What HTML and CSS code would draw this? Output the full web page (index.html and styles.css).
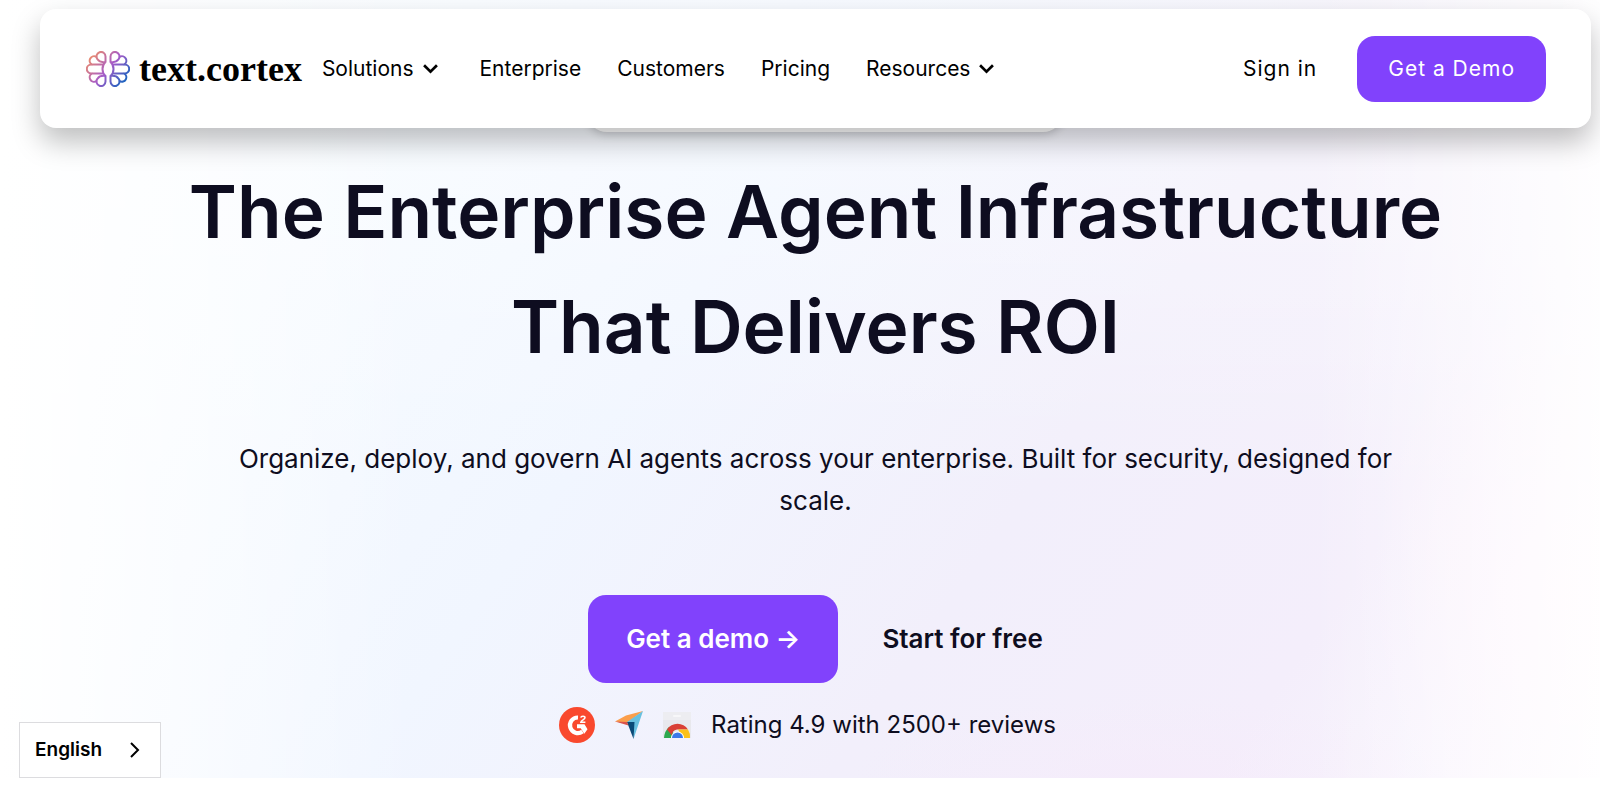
FILE: index.html
```html
<!DOCTYPE html>
<html lang="en">
<head>
<meta charset="utf-8">
<meta name="viewport" content="width=device-width, initial-scale=1">
<title>TextCortex</title>
<link rel="stylesheet" href="styles.css">
</head>
<body>
<div class="hero">
  <header class="navbar">
    <a class="brand" href="#">
      <svg class="brand-mark" viewBox="0 0 44 36" fill="none" stroke="url(#brandGradient)" stroke-width="2" stroke-linejoin="round" stroke-linecap="round" aria-hidden="true">
        <defs>
          <linearGradient id="brandGradient" x1="4" y1="3" x2="40" y2="33" gradientUnits="userSpaceOnUse">
            <stop offset="0" stop-color="#ef8f68"/>
            <stop offset="0.5" stop-color="#a65cc8"/>
            <stop offset="1" stop-color="#0c64be"/>
          </linearGradient>
        </defs>
        <path d="M19.500 11V5.500a4.500 4.500 0 1 0-8 2.800C13 10.500 16.500 11.500 19.500 11Q16.500 13.500 16.500 18T19.500 25C16.500 24.500 13 25.500 11.500 27.700a4.500 4.500 0 1 0 8 2.800V25"/>
        <path d="M10.300 5.800a4.200 4.200 0 0 0-4.300 7.800M17.200 13.600H5.200a4.400 4.400 0 0 0 0 8.800H17.200M10.300 30.200a4.200 4.200 0 0 1-4.300-7.800"/>
        <path d="M24.500 11V5.500a4.500 4.500 0 1 1 8 2.800C31 10.500 27.500 11.500 24.500 11Q27.500 13.500 27.500 18T24.500 25C27.500 24.500 31 25.500 32.500 27.700a4.500 4.500 0 1 1-8 2.800V25"/>
        <path d="M33.700 5.800a4.200 4.200 0 0 1 4.300 7.800M26.800 13.600H38.800a4.400 4.400 0 0 1 0 8.800H26.800M33.700 30.200a4.200 4.200 0 0 0 4.300-7.800"/>
      </svg>
      <span>text.cortex</span>
    </a>
    <nav class="menu" aria-label="Main">
      <button class="menu-item" type="button">Solutions
        <svg class="chevron" viewBox="0 0 14 10" aria-hidden="true"><path d="M1 2l6 6 6-6"/></svg>
      </button>
      <a class="menu-item" href="#">Enterprise</a>
      <a class="menu-item" href="#">Customers</a>
      <a class="menu-item" href="#">Pricing</a>
      <button class="menu-item" type="button">Resources
        <svg class="chevron" viewBox="0 0 14 10" aria-hidden="true"><path d="M1 2l6 6 6-6"/></svg>
      </button>
    </nav>
    <div class="account">
      <a class="sign-in" href="#">Sign in</a>
      <a class="nav-cta" href="#">Get a Demo</a>
    </div>
  </header>
  <div class="announcement"></div>
  <main class="intro">
    <h1 class="title">The Enterprise Agent Infrastructure<br>That Delivers ROI</h1>
    <p class="lead">Organize, deploy, and govern AI agents across your enterprise. Built for security, designed for scale.</p>
    <div class="actions">
      <a class="primary" href="#">Get a demo →</a>
      <a class="secondary" href="#">Start for free</a>
    </div>
    <div class="rating">
      <svg class="badge-g2" viewBox="0 0 36 36" aria-hidden="true">
        <circle cx="18" cy="18" r="18" fill="#f9492e"/>
        <path d="M19 10.500A7.800 7.800 0 1 0 23.500 24.500" fill="none" stroke="#fff" stroke-width="4.200"/>
        <path d="M18 17.200h7.500l3 5-3.200 4.600-3.600-5.600H18z" fill="#fff"/>
        <path d="M21.800 10.700c.3-2 4.200-2 4.200.1 0 1.900-4 2.200-4.200 4.500h4.600" fill="none" stroke="#fff" stroke-width="1.500"/>
      </svg>
      <svg class="badge-capterra" viewBox="0 0 28 28" aria-hidden="true">
        <path d="M0 10.500L11 4.500 28 0 12 12z" fill="#fb9e4b"/>
        <path d="M28 0L12 11h7l-.5 17z" fill="#68c0e0"/>
        <path d="M12 11h7.500L18.500 28z" fill="#0a4a78"/>
        <path d="M0 10.500l12 .5 1.500 3.500z" fill="#d9534a"/>
      </svg>
      <svg class="badge-chrome" viewBox="0 0 28 26" aria-hidden="true">
        <path d="M0 0h28v26H0z" fill="#e8e8ed"/>
        <path d="M0 0h28v8H0z" fill="#ededf1"/>
        <rect x="10" y="3" width="8" height="2" rx="1" fill="#f7f7f9"/>
        <path d="M1 26a13 15 0 0 1 5-11l8 11z" fill="#2da94f"/>
        <path d="M4 17.500a12.500 12.500 0 0 1 21 0H14a6 6 0 0 0-5 6z" fill="#d93f35"/>
        <path d="M15 17.500h10A14 14 0 0 1 27 26h-7z" fill="#fbc11b"/>
        <path d="M8 26a6.500 6.500 0 0 1 13 0z" fill="#fff"/>
        <path d="M9 26a5.500 5.500 0 0 1 11 0z" fill="#3b79e8"/>
      </svg>
      <span>Rating 4.9 with 2500+ reviews</span>
    </div>
  </main>
</div>
<button class="language" type="button">English
  <svg class="language-arrow" viewBox="0 0 10 16" aria-hidden="true"><path d="M1 1l7 7-7 7"/></svg>
</button>
</body>
</html>
```

FILE: styles.css
```css
* {
  box-sizing: border-box;
}

body {
  margin: 0;
  min-height: 100vh;
  background: #fff;
  color: #0e0d20;
  font-family: Inter, "Liberation Sans", sans-serif;
}

a {
  color: inherit;
  text-decoration: none;
}

button {
  border: 0;
  background: none;
  color: inherit;
  font: inherit;
  cursor: pointer;
}

.hero {
  padding: 9px 9px 35px 40px;
  background:
    linear-gradient(90deg, #fff 0, rgba(255, 255, 255, 0) 26%, rgba(255, 255, 255, 0) 82%, rgba(255, 255, 255, 0.9) 100%),
    radial-gradient(ellipse 200px 300px at 98% 76%, rgba(255, 242, 252, 0.9), rgba(255, 242, 252, 0)),
    radial-gradient(ellipse 300px 80px at 72% 100%, rgba(246, 234, 250, 0.5), rgba(246, 234, 250, 0)),
    linear-gradient(180deg, rgba(255, 255, 255, 0.4) 0, rgba(255, 255, 255, 0.3) 30%, rgba(255, 255, 255, 0) 65%),
    linear-gradient(125deg, #f8fcff 5%, #f5faff 22%, #f1f6ff 42%, #f2effb 64%, #f4eefb 82%, #fbf8fe 100%);
}

.navbar {
  position: relative;
  z-index: 1;
  display: flex;
  align-items: center;
  height: 119px;
  padding: 0 45px 0 46px;
  border-radius: 16px;
  background: #fff;
  box-shadow: 0 14px 28px rgba(0, 0, 0, 0.25);
  color: #000;
  font-size: 21px;
}

.brand {
  display: flex;
  align-items: center;
  gap: 9px;
  font: 700 36px/44px "Liberation Serif", serif;
}

.brand-mark {
  width: 44px;
  height: 36px;
}

.menu {
  display: flex;
  align-items: center;
  gap: 36px;
  margin-left: 20px;
}

.menu-item {
  display: flex;
  align-items: center;
  gap: 9px;
  padding: 0;
}

.chevron {
  width: 15px;
  height: 11px;
  fill: none;
  stroke: #000;
  stroke-width: 2.5;
}

.menu .menu-item:first-child {
  margin-right: 6px;
}

.account {
  display: flex;
  align-items: center;
  gap: 40px;
  margin-left: auto;
  letter-spacing: 1px;
}

.nav-cta {
  padding: 20px 31px;
  border-radius: 18px;
  background: #8142fc;
  color: #fff;
  line-height: 26px;
}

.announcement {
  width: 476px;
  height: 40px;
  margin: -36px 0 0 calc(50% - 229px);
  border-radius: 20px;
  background: #fff;
  box-shadow: 0 2px 10px rgba(0, 0, 0, 0.2);
}

.intro {
  display: flex;
  flex-direction: column;
  align-items: center;
  padding-top: 22px;
  text-align: center;
}

.title {
  margin: 0;
  font-size: 73px;
  font-weight: 600;
  line-height: 115px;
}

.lead {
  max-width: 1200px;
  margin: 54px 0 73px;
  font-size: 26px;
  line-height: 42px;
}

.actions {
  display: flex;
  align-items: center;
  gap: 44px;
  font-size: 26px;
  font-weight: 600;
  line-height: 40px;
}

.primary {
  padding: 24px 38px;
  border-radius: 18px;
  background: #8142fc;
  color: #fff;
}

.rating {
  display: flex;
  align-items: center;
  gap: 20px;
  margin-top: 24px;
  padding-right: 16px;
  font-size: 24px;
  line-height: 36px;
}

.badge-g2 {
  width: 36px;
  height: 36px;
}

.badge-capterra {
  width: 28px;
  height: 28px;
}

.badge-chrome {
  width: 28px;
  height: 26px;
}

.language {
  position: fixed;
  bottom: 13px;
  left: 19px;
  display: flex;
  align-items: center;
  gap: 28px;
  padding: 14px 20px 14px 15px;
  border: 1px solid #dcdcdf;
  background: #fff;
  color: #000;
  font-size: 19px;
  font-weight: 600;
  line-height: 26px;
}

.language-arrow {
  width: 10px;
  height: 16px;
  fill: none;
  stroke: #000;
  stroke-width: 2;
}
```
